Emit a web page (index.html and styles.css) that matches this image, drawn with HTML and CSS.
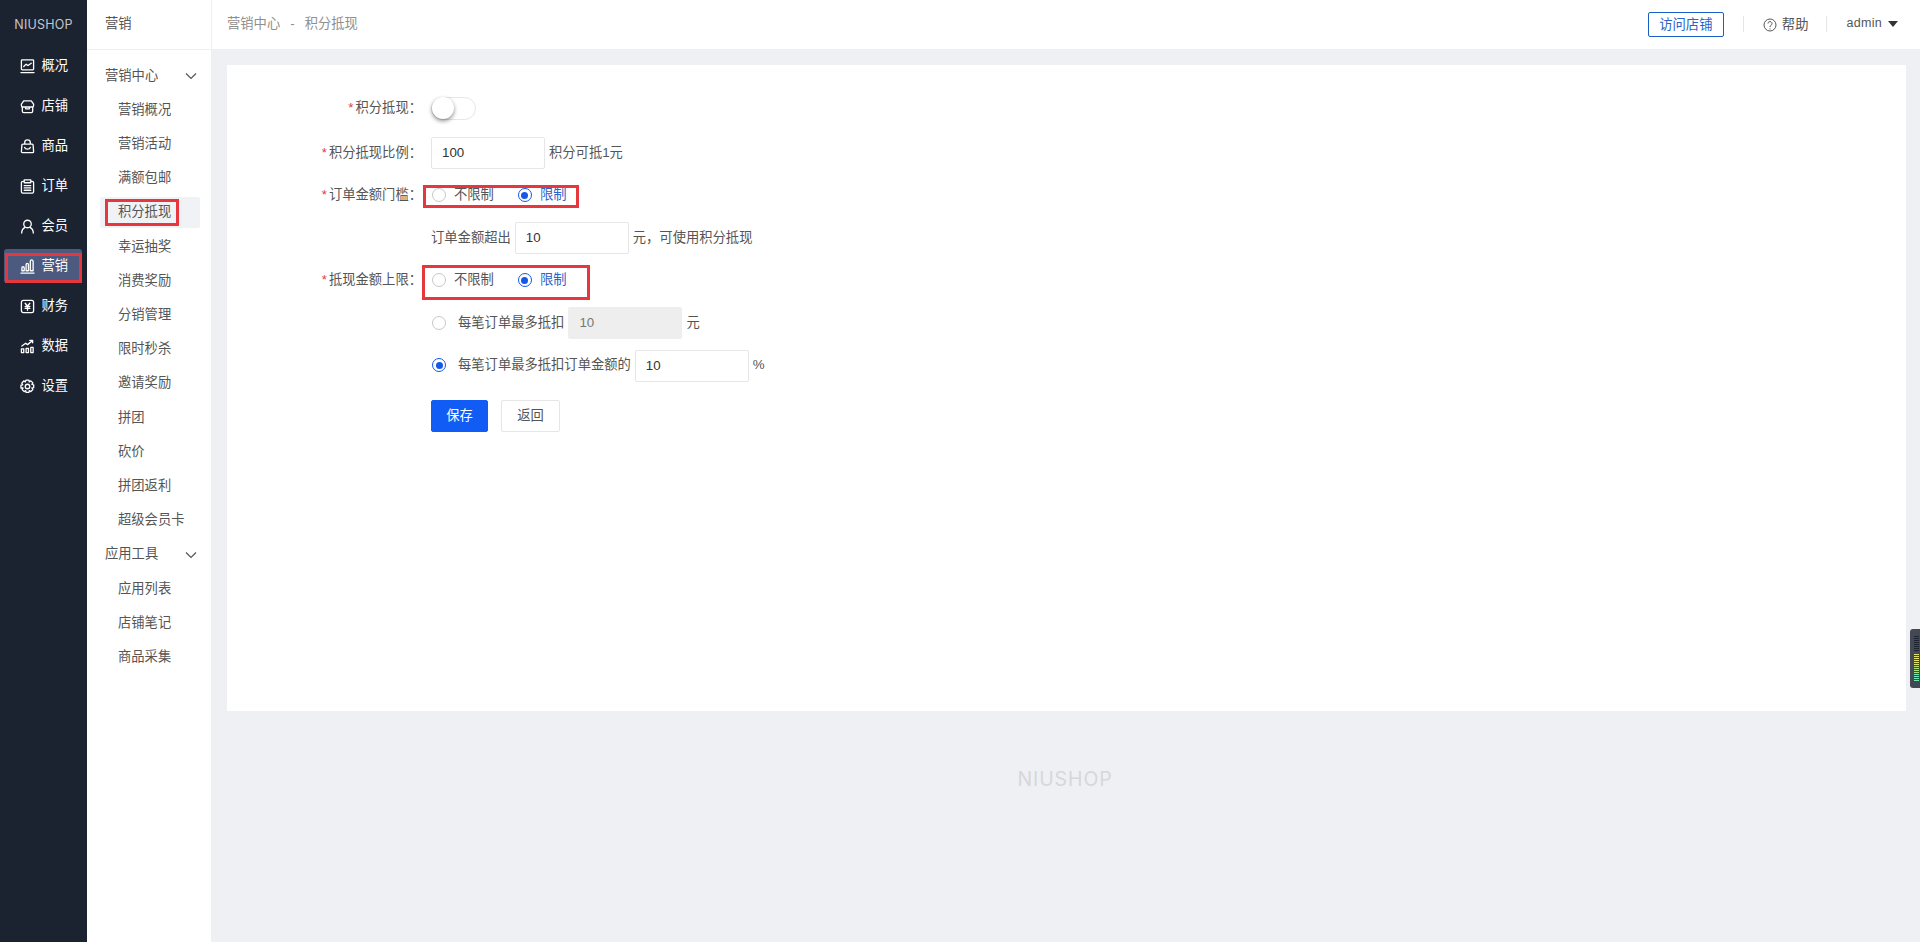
FILE: index.html
```html
<!DOCTYPE html>
<html lang="zh-CN">
<head>
<meta charset="utf-8">
<title>积分抵现</title>
<link rel="stylesheet" href="styles.css">
</head>
<body>
<aside class="rail">
  <div class="rail-logo">NIUSHOP</div>
  <nav class="rail-nav">
    <a class="rail-item"><svg class="rail-icon" viewBox="0 0 16 16"><rect x="1.500" y="1" width="13" height="10.500" rx=".8"/><path d="M4 8l2.500-2.500 2 1.500L12 4.500M1 14.500h14"/></svg>概况</a>
    <a class="rail-item"><svg class="rail-icon" viewBox="0 0 16 16"><path d="M4 2h8l2.500 3.500V7a1.500 1.500 0 0 1-1 1.400V13a1.500 1.500 0 0 1-1.500 1.500H4A1.500 1.500 0 0 1 2.500 13V8.400a1.500 1.500 0 0 1-1-1.400V5.500zM2 8.500h12M6 8.500v2h4v-2"/></svg>店铺</a>
    <a class="rail-item"><svg class="rail-icon" viewBox="0 0 16 16"><path d="M3 5.500h10a1 1 0 0 1 1 1l.5 7a1 1 0 0 1-1 1h-11a1 1 0 0 1-1-1l.5-7a1 1 0 0 1 1-1zM5 5.500V4a3 3 0 0 1 6 0v1.500M5 9c.8 2.300 5.200 2.300 6 0"/></svg>商品</a>
    <a class="rail-item"><svg class="rail-icon" viewBox="0 0 16 16"><path d="M4.500 2.500H3a1.500 1.500 0 0 0-1.500 1.500v9.500A1.500 1.500 0 0 0 3 15h10a1.500 1.500 0 0 0 1.500-1.500V4A1.500 1.500 0 0 0 13 2.500h-1.500M4.500 1h7v3h-7zM4.500 7h7M4.500 9.500h7M4.500 12h7"/></svg>订单</a>
    <a class="rail-item"><svg class="rail-icon" viewBox="0 0 16 16"><circle cx="8" cy="5.300" r="4"/><path d="M1.800 15c0-3.300 2-5.200 3.600-6M14.200 15c0-3.300-2-5.200-3.600-6"/></svg>会员</a>
    <a class="rail-item rail-item-active"><svg class="rail-icon" viewBox="0 0 16 16"><path d="M1 15h14M2 9.500a1 1 0 0 1 2.500 0v3H2zM6.500 6a1.200 1.200 0 0 1 2.500 0v6.500H6.500zM11 2.500a1.500 1.500 0 0 1 3 0v10h-3z"/></svg>营销<span class="mark"></span></a>
    <a class="rail-item"><svg class="rail-icon" viewBox="0 0 16 16"><rect x="1.500" y="1.500" width="13" height="13" rx="2"/><path d="M5.500 4.500L8 7.500l2.500-3M8 7.500v4.500M5.500 8h5M5.500 10h5"/></svg>财务</a>
    <a class="rail-item"><svg class="rail-icon" viewBox="0 0 16 16"><path d="M1.500 10.500h2.500v4H1.500zM6.500 10h2.500v4.500H6.500zM11.500 9h2.500v5.500h-2.500zM2 7.500l4-3 2 1.500 5-4M10.500 1.500H13.500V4"/></svg>数据</a>
    <a class="rail-item"><svg class="rail-icon" viewBox="0 0 16 16"><path d="M6.500 1h3l.4 1.900 1.700-1 2.100 2.100-1 1.700 1.900.4v3l-1.900.4 1 1.700-2.100 2.100-1.700-1-.4 1.900h-3l-.4-1.900-1.700 1-2.100-2.100 1-1.700L1 9.500v-3l1.900-.4-1-1.700L4 1.900l1.700 1z" transform="translate(0 .1)"/><circle cx="8" cy="8" r="2.400"/></svg>设置</a>
  </nav>
</aside>

<aside class="side">
  <div class="side-head">营销</div>
  <nav class="side-nav">
    <div class="side-group">营销中心<svg class="chev" viewBox="0 0 12 8"><path d="M1 1.500l5 5 5-5"/></svg></div>
    <a class="side-item">营销概况</a>
    <a class="side-item">营销活动</a>
    <a class="side-item">满额包邮</a>
    <a class="side-item side-item-active">积分抵现<span class="mark mark-side"></span></a>
    <a class="side-item">幸运抽奖</a>
    <a class="side-item">消费奖励</a>
    <a class="side-item">分销管理</a>
    <a class="side-item">限时秒杀</a>
    <a class="side-item">邀请奖励</a>
    <a class="side-item">拼团</a>
    <a class="side-item">砍价</a>
    <a class="side-item">拼团返利</a>
    <a class="side-item">超级会员卡</a>
    <div class="side-group">应用工具<svg class="chev" viewBox="0 0 12 8"><path d="M1 1.500l5 5 5-5"/></svg></div>
    <a class="side-item">应用列表</a>
    <a class="side-item">店铺笔记</a>
    <a class="side-item">商品采集</a>
  </nav>
</aside>

<div class="main">
  <header class="top">
    <div class="crumbs"><span>营销中心</span><span class="crumb-sep">-</span><span>积分抵现</span></div>
    <div class="top-actions">
      <a class="visit">访问店铺</a>
      <i class="top-div"></i>
      <a class="help"><svg class="help-icon" viewBox="0 0 14 14"><circle cx="7" cy="7" r="6"/><path d="M5 5.500a2 2 0 1 1 3 1.800c-.7.400-1 .8-1 1.700M7 10.300v1"/></svg>帮助</a>
      <i class="top-div"></i>
      <a class="user">admin<i class="caret"></i></a>
    </div>
  </header>

  <main class="content">
    <section class="card">
      <form class="form">
        <div class="row row-first">
          <label class="label"><em>*</em>积分抵现：</label>
          <span class="switch"><i class="knob"></i></span>
        </div>
        <div class="row">
          <label class="label"><em>*</em>积分抵现比例：</label>
          <span class="input">100</span><span class="after">积分可抵1元</span>
        </div>
        <div class="row">
          <label class="label"><em>*</em>订单金额门槛：</label>
          <span class="radios">
            <span class="radio"><i class="dot"></i>不限制</span>
            <span class="radio radio-on"><i class="dot"></i>限制</span>
            <span class="mark mark-r1"></span>
          </span>
        </div>
        <div class="row row-indent">
          <span class="before">订单金额超出</span><span class="input">10</span><span class="after">元，可使用积分抵现</span>
        </div>
        <div class="row">
          <label class="label"><em>*</em>抵现金额上限：</label>
          <span class="radios">
            <span class="radio"><i class="dot"></i>不限制</span>
            <span class="radio radio-on"><i class="dot"></i>限制</span>
            <span class="mark mark-r2"></span>
          </span>
        </div>
        <div class="row row-indent">
          <span class="radio radio-wide"><i class="dot"></i>每笔订单最多抵扣</span><span class="input input-off">10</span><span class="after">元</span>
        </div>
        <div class="row row-indent">
          <span class="radio radio-wide radio-picked"><i class="dot"></i>每笔订单最多抵扣订单金额的</span><span class="input">10</span><span class="after">%</span>
        </div>
        <div class="row row-indent row-btns">
          <a class="btn btn-primary">保存</a>
          <a class="btn">返回</a>
        </div>
      </form>
    </section>
    <div class="foot-logo">NIUSHOP</div>
  </main>
</div>

<div class="widget">
  <svg viewBox="0 0 5 46" class="widget-bars">
    <path class="b-dark" d="M0 .5h5M0 2.500h5M0 4.500h5M0 6.500h5M0 8.500h5M0 10.500h5M0 12.500h5M0 14.500h5"/>
    <path class="b-yel" d="M0 18.500h5M0 20.500h5M0 22.500h5M0 24.500h5M0 26.500h5M0 28.500h5"/>
    <path class="b-grn" d="M0 30.500h5M0 32.500h5M0 34.500h5M0 36.500h5"/>
    <path class="b-teal" d="M0 38.500h5M0 40.500h5M0 42.500h5M0 44.500h5"/>
  </svg>
</div>
</body>
</html>
```
FILE: styles.css
```css
* { box-sizing: border-box; }
html, body { height: 100%; }
body {
  margin: 0;
  display: flex;
  height: 942px;
  overflow: hidden;
  background: #eff0f4;
  color: #555;
  font: 13.3px/1.4 "Liberation Sans", "Noto Sans CJK SC", sans-serif;
}
a { color: inherit; text-decoration: none; }
i, em { font-style: normal; }

.mark {
  position: absolute;
  border: 3px solid #e5373d;
  pointer-events: none;
}

/* dark rail */
.rail { width: 87px; flex: none; background: #1b2230; color: #fff; }
.rail-logo {
  height: 49px;
  padding-top: 18px;
  text-align: center;
  font: 12.5px/14px "Inter", sans-serif;
  letter-spacing: 0.2px;
  color: #c3c6cc;
}
.rail-nav { display: flex; flex-direction: column; gap: 6px; padding: 0 5px 0 4px; }
.rail-item {
  position: relative;
  display: flex;
  align-items: center;
  gap: 7px;
  height: 34px;
  padding-left: 15.500px;
  border-radius: 3px;
}
.rail-item-active { background: #4b5a7e; }
.rail-item-active .mark { left: 1px; top: 4px; right: 0; bottom: 0; }
.rail-icon {
  width: 15px;
  height: 15px;
  flex: none;
  fill: none;
  stroke: #fff;
  stroke-width: 1.400;
  stroke-linejoin: round;
  stroke-linecap: round;
}

/* second column */
.side { width: 125px; flex: none; background: #fff; border-right: 1px solid #eeeff2; }
.side-head {
  height: 50px;
  padding: 15px 0 0 18px;
  border-bottom: 1px solid #eeeff2;
  color: #555;
}
.side-nav { padding-top: 10.500px; }
.side-group {
  display: flex;
  align-items: center;
  justify-content: space-between;
  height: 31px;
  margin-bottom: 3.200px;
  padding: 0 14px 0 18px;
  color: #555;
}
.chev { width: 12px; height: 8px; fill: none; stroke: #555; stroke-width: 1.200; }
.side-item {
  position: relative;
  display: flex;
  align-items: center;
  height: 31px;
  margin: 0 11px 3.200px 13px;
  padding-left: 18px;
  border-radius: 2px;
  color: #555;
}
.side-item-active { background: #f1f2f5; }
.mark-side { left: 5px; top: 2px; width: 74px; height: 27px; }

/* header */
.main { flex: 1; min-width: 0; display: flex; flex-direction: column; }
.top {
  height: 50px;
  flex: none;
  display: flex;
  align-items: center;
  justify-content: space-between;
  padding: 0 22px 1px 15px;
  background: #fff;
  border-bottom: 1px solid #eeeff2;
  color: #8f8f8f;
}
.crumbs { display: flex; gap: 9px; }
.crumb-sep { padding: 0 1px; }
.top-actions { display: flex; align-items: center; color: #555; }
.visit {
  width: 76px;
  height: 25px;
  border: 1px solid #1a5fc8;
  border-radius: 2px;
  color: #2a63c9;
  text-align: center;
  line-height: 23px;
}
.top-div { width: 1px; height: 16px; background: #e6e6e6; margin: 0 19px; }
.help { display: flex; align-items: center; gap: 5px; position: relative; top: 1px; margin-right: -1px; }
.help-icon { width: 14px; height: 14px; fill: none; stroke: #555; stroke-width: 1; }
.user { display: flex; align-items: center; gap: 6px; font-size: 12.500px; letter-spacing: 0.300px; }
.caret {
  width: 0;
  height: 0;
  border: 5.500px solid transparent;
  border-top: 6px solid #333;
  border-bottom: 0;
}

/* content */
.content { flex: 1; min-height: 0; padding: 15px 14px 0 15px; }
.card { height: 646px; background: #fff; padding-top: 27px; }
.row { display: flex; align-items: center; height: 32px; margin-bottom: 10.500px; }
.row-first { margin-bottom: 13px; }
.row-indent { padding-left: 204px; }
.label { width: 204px; padding-right: 9px; flex: none; text-align: right; color: #555; white-space: nowrap; }
.label em { color: #e5373d; margin-right: 2px; }
.switch {
  position: relative;
  display: block;
  width: 45px;
  height: 23px;
  border: 1px solid #e6e6e6;
  border-radius: 12px;
  background: #fff;
}
.knob {
  position: absolute;
  left: 0;
  top: -1px;
  width: 22px;
  height: 22px;
  border-radius: 50%;
  background: #fff;
  box-shadow: 0 2px 4px rgba(0, 0, 0, .45);
}
.input {
  display: block;
  width: 114px;
  height: 32px;
  flex: none;
  padding-left: 10px;
  border: 1px solid #e6e6e6;
  border-radius: 2px;
  background: #fff;
  color: #333;
  line-height: 30px;
}
.input-off { background: #eeeeee; border-color: #eeeeee; color: #777; }
.before { margin-right: 4px; }
.after { margin-left: 4px; white-space: nowrap; }
.radios { position: relative; display: flex; align-items: center; gap: 24px; padding-left: 1px; }
.radio { display: inline-flex; align-items: center; gap: 8px; white-space: nowrap; }
.dot {
  position: relative;
  display: block;
  width: 14px;
  height: 14px;
  flex: none;
  border: 1px solid #c8c8c8;
  border-radius: 50%;
  background: #fff;
}
.radio-on { color: #2a63c9; }
.radio-on .dot, .radio-picked .dot { border-color: #1558e8; }
.radio-on .dot::after, .radio-picked .dot::after {
  content: "";
  position: absolute;
  left: 2.500px;
  top: 2.500px;
  width: 7px;
  height: 7px;
  border-radius: 50%;
  background: #1558e8;
}
.radio-wide { gap: 12px; margin-left: 1px; margin-right: 4px; }
.mark-r1 { left: -8px; top: -1px; width: 156px; height: 23px; }
.mark-r2 { left: -9px; top: -6px; width: 168px; height: 35px; }
.row-btns { gap: 13px; margin-top: 18px; }
.btn {
  display: block;
  width: 59px;
  height: 32px;
  border: 1px solid #e6e6e6;
  border-radius: 2px;
  text-align: center;
  line-height: 30px;
  color: #555;
  background: #fff;
}
.btn-primary { width: 57px; background: #105cf5; border-color: #105cf5; color: #fff; }
.foot-logo {
  margin-top: 56px;
  padding-right: 3px;
  text-align: center;
  font: 19.500px/24px "Inter", sans-serif;
  letter-spacing: 0.900px;
  color: #d6d7da;
}

/* edge widget */
.widget {
  position: absolute;
  right: 0;
  top: 629px;
  width: 10px;
  height: 59px;
  padding: 7px 0 0 4px;
  background: #434954;
  border-radius: 3px 0 0 3px;
}
.widget-bars { display: block; width: 5px; height: 46px; fill: none; stroke-width: 1; }
.b-dark { stroke: #1f2530; }
.b-yel { stroke: #e3df6e; }
.b-grn { stroke: #a9de85; }
.b-teal { stroke: #72e4b6; }
```
